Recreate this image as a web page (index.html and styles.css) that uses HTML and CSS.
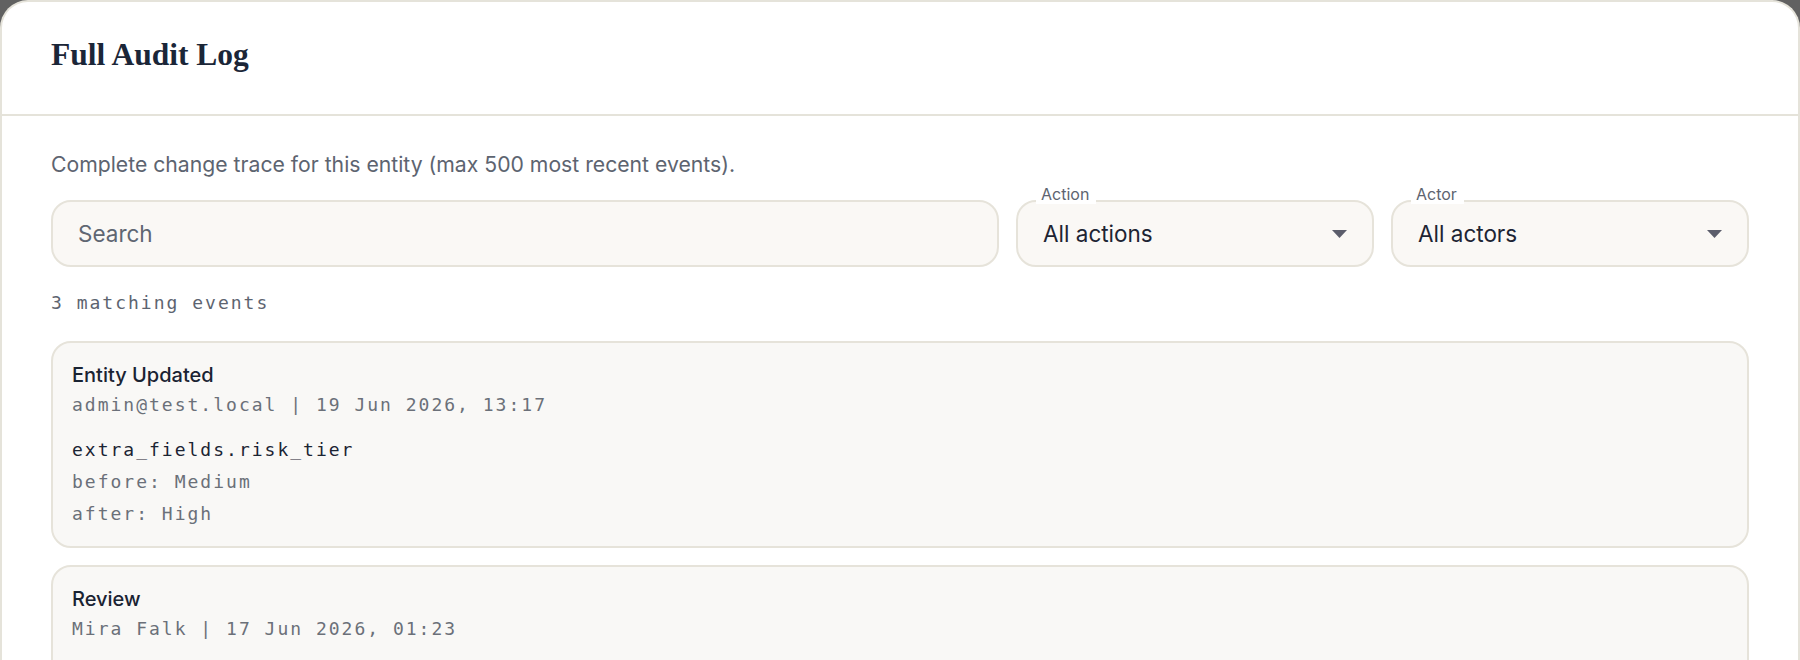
FILE: index.html
```html
<!DOCTYPE html>
<html lang="en">
<head>
  <meta charset="UTF-8">
  <meta name="viewport" content="width=device-width, initial-scale=1.0">
  <title>Full Audit Log</title>
  <link rel="stylesheet" href="styles.css">
</head>
<body>

  <div class="dialog">
    <div class="dialog-header">
      <h2>Full Audit Log</h2>
    </div>

    <div class="dialog-body">
      <p class="intro">Complete change trace for this entity (max 500 most recent events).</p>

      <div class="filters">
        <div class="field">
          <input type="text" class="search" placeholder="Search">
        </div>
        <div class="field">
          <span class="field-label">Action</span>
          <div class="select">
            <span>All actions</span>
            <svg class="caret" width="15" height="8" viewBox="0 0 15 8"><polygon points="0,0 15,0 7.5,8"/></svg>
          </div>
        </div>
        <div class="field">
          <span class="field-label">Actor</span>
          <div class="select">
            <span>All actors</span>
            <svg class="caret" width="15" height="8" viewBox="0 0 15 8"><polygon points="0,0 15,0 7.5,8"/></svg>
          </div>
        </div>
      </div>

      <div class="count">3 matching events</div>

      <div class="events">
        <div class="event">
          <div class="event-title">Entity Updated</div>
          <div class="event-meta">admin@test.local | 19 Jun 2026, 13:17</div>
          <div class="change">
            <div class="change-key">extra_fields.risk_tier</div>
            <div class="change-val">before: Medium</div>
            <div class="change-val">after: High</div>
          </div>
        </div>

        <div class="event">
          <div class="event-title">Review</div>
          <div class="event-meta">Mira Falk | 17 Jun 2026, 01:23</div>
          <div class="change">
            <div class="change-key">review.status</div>
            <div class="change-val">before: Pending</div>
            <div class="change-val">after: Approved</div>
          </div>
        </div>

        <div class="event">
          <div class="event-title">Entity Created</div>
          <div class="event-meta">admin@test.local | 12 Jun 2026, 09:04</div>
        </div>
      </div>
    </div>
  </div>

</body>
</html>
```

FILE: styles.css
```css
html, body {
  height: 100%;
}

body {
  margin: 0;
  overflow: hidden;
  background-color: #616161;
  font-family: 'Inter', 'Liberation Sans', sans-serif;
  color: #1b2433;
}

.dialog {
  box-sizing: border-box;
  height: 100%;
  background-color: #fff;
  border: 2px solid #e5e3da;
  border-bottom: none;
  border-radius: 28px 28px 0 0;
}

.dialog-header {
  padding: 33px 49px 39px;
  border-bottom: 2px solid #e5e3da;
}

.dialog-header h2 {
  margin: 0;
  font-family: 'Liberation Serif', serif;
  font-size: 31.5px;
  line-height: 40px;
  font-weight: bold;
  color: #1b2638;
}

.dialog-body {
  padding: 34px 49px 0;
}

.intro {
  margin: 0 0 22px;
  font-size: 21.2px;
  line-height: 28px;
  color: #5d6470;
}

.filters {
  display: grid;
  grid-template-columns: minmax(0, 1fr) 358px 358px;
  gap: 17px;
}

.field {
  position: relative;
}

.search,
.select {
  box-sizing: border-box;
  width: 100%;
  height: 67px;
  padding: 0 25px;
  background-color: #faf8f5;
  border: 2px solid #e6e3da;
  border-radius: 20px;
  font-family: inherit;
  font-size: 22.5px;
  color: #1d2433;
}

.search::placeholder {
  color: #5f6672;
}

.search:focus {
  outline: none;
}

.select {
  display: flex;
  align-items: center;
  justify-content: space-between;
}

.caret {
  fill: #5b5d6b;
}

.field-label {
  position: absolute;
  top: -16px;
  left: 20px;
  padding: 0 7px 0 5px;
  background-color: #fff;
  font-size: 16px;
  line-height: 20px;
  color: #5d6470;
}

.count {
  margin: 22px 0 24px;
  font-family: 'DejaVu Sans Mono', monospace;
  font-size: 18px;
  line-height: 28px;
  letter-spacing: 2px;
  color: #5d6470;
}

.events {
  display: flex;
  flex-direction: column;
  gap: 17px;
}

.event {
  padding: 18px 19px 16px;
  background-color: #f9f8f6;
  border: 2px solid #e6e3da;
  border-radius: 20px;
}

.event-title {
  font-size: 20px;
  line-height: 28px;
  font-weight: 500;
  color: #1a2332;
}

.event-meta {
  font-family: 'DejaVu Sans Mono', monospace;
  font-size: 18px;
  line-height: 31px;
  letter-spacing: 2px;
  color: #6b7079;
}

.change {
  margin-top: 14px;
  font-family: 'DejaVu Sans Mono', monospace;
  font-size: 18px;
  line-height: 32px;
  letter-spacing: 2px;
}

.change-key {
  color: #1b2433;
  font-weight: 500;
}

.change-val {
  color: #6b7079;
}
```
